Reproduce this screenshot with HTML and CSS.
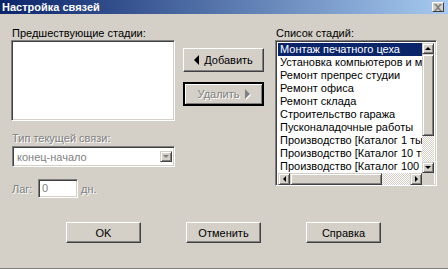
FILE: index.html
```html
<!DOCTYPE html>
<html lang="ru">
<head>
    <meta charset="UTF-8">
    <title>Настройка связей</title>
    <link rel="stylesheet" href="styles.css">
</head>
<body>
    <div class="window">
        <div class="titlebar">
            <span class="title">Настройка связей</span>
            <span class="close-btn">
                <svg width="8" height="7" viewBox="0 0 8 7">
                    <path d="M0 0h2l2 2 2-2h2L5 3.5 8 7H6L4 5 2 7H0l3-3.5z" fill="#808080"/>
                </svg>
            </span>
        </div>

        <div class="main">
            <div class="col-left">
                <div class="label">Предшествующие стадии:</div>
                <div class="listbox prev-list"></div>

                <div class="label disabled type-label">Тип текущей связи:</div>
                <div class="combo">
                    <span class="combo-text">конец-начало</span>
                    <span class="sb-btn combo-btn"><i class="arr arr-down dis"></i></span>
                </div>

                <div class="lag-row">
                    <span class="disabled lag-label">Лаг:</span>
                    <span class="lag-input">0</span>
                    <span class="disabled">дн.</span>
                </div>
            </div>

            <div class="col-mid">
                <button class="btn btn-add"><i class="tri-left"></i>Добавить</button>
                <button class="btn btn-del default"><span class="disabled">Удалить</span><i class="tri-right"></i></button>
            </div>

            <div class="col-right">
                <div class="label">Список стадий:</div>
                <div class="listbox stage-list">
                    <div class="stage-body">
                        <ul class="items">
                            <li class="selected">Монтаж печатного цеха</li>
                            <li>Установка компьютеров и монтаж сети</li>
                            <li>Ремонт препрес студии</li>
                            <li>Ремонт офиса</li>
                            <li>Ремонт склада</li>
                            <li>Строительство гаража</li>
                            <li>Пусконаладочные работы</li>
                            <li>Производство [Каталог 1 тыс. экз.]</li>
                            <li>Производство [Каталог 10 тыс. экз.]</li>
                            <li>Производство [Каталог 100 тыс. экз.]</li>
                        </ul>
                        <div class="vscroll">
                            <span class="sb-btn"><i class="arr arr-up"></i></span>
                            <span class="v-thumb"></span>
                            <span class="track"></span>
                            <span class="sb-btn"><i class="arr arr-down"></i></span>
                        </div>
                    </div>
                    <div class="hscroll">
                        <span class="sb-btn"><i class="arr arr-left"></i></span>
                        <span class="h-thumb"></span>
                        <span class="track"></span>
                        <span class="sb-btn"><i class="arr arr-right"></i></span>
                        <span class="corner"></span>
                    </div>
                </div>
            </div>
        </div>

        <div class="footer">
            <button class="btn btn-foot">OK</button>
            <button class="btn btn-foot">Отменить</button>
            <button class="btn btn-foot">Справка</button>
        </div>
    </div>
</body>
</html>
```

FILE: styles.css
```css
body {
    margin: 0;
    font-family: "Liberation Sans", Arial, sans-serif;
    font-size: 11px;
    background-color: #d4d0c8;
}
.window {
    width: 448px;
    height: 269px;
    box-sizing: border-box;
    background-color: #d4d0c8;
    border-bottom: 1px solid #808080;
    color: #000;
}
.titlebar {
    height: 14px;
    display: flex;
    align-items: center;
    justify-content: space-between;
    padding: 0 4px 0 2px;
    background: linear-gradient(to right, #0a246a, #a6caf0);
}
.title {
    color: #fff;
    font-weight: bold;
    font-size: 11px;
    line-height: 14px;
}
.close-btn {
    width: 12px;
    height: 10px;
    box-sizing: border-box;
    display: flex;
    align-items: center;
    justify-content: center;
    background-color: #d4d0c8;
    border: 1px solid;
    border-color: #fff #404040 #404040 #fff;
}
.main {
    display: flex;
    align-items: flex-start;
    padding: 13px 0 0 11px;
}
.label {
    line-height: 13px;
    height: 13px;
    padding-left: 1px;
    white-space: nowrap;
}
.disabled {
    color: #808080;
    text-shadow: 1px 1px #fff;
}
.listbox {
    background-color: #fff;
    box-sizing: border-box;
    border: 1px solid;
    border-color: #808080 #fff #fff #808080;
    box-shadow: inset 1px 1px #404040, inset -1px -1px #d4d0c8;
}
.col-left {
    width: 164px;
}
.prev-list {
    height: 81px;
}
.type-label {
    margin-top: 11px;
}
.combo {
    margin-top: 1px;
    margin-left: 1px;
    height: 21px;
    box-sizing: border-box;
    display: flex;
    align-items: center;
    justify-content: space-between;
    padding: 2px;
    background-color: #fff;
    border: 1px solid;
    border-color: #808080 #fff #fff #808080;
    box-shadow: inset 1px 1px #404040, inset -1px -1px #d4d0c8;
}
.combo-text {
    color: #808080;
    padding-left: 2px;
}
.combo-btn {
    width: 11px;
    height: 16px;
}
.lag-row {
    display: flex;
    align-items: center;
    margin-top: 12px;
    padding-left: 1px;
}
.lag-label {
    width: 26px;
}
.lag-input {
    width: 40px;
    height: 19px;
    margin-right: 3px;
    box-sizing: border-box;
    padding: 2px 3px;
    line-height: 13px;
    color: #808080;
    background-color: #fff;
    border: 1px solid;
    border-color: #808080 #fff #fff #808080;
    box-shadow: inset 1px 1px #404040, inset -1px -1px #d4d0c8;
}
.col-mid {
    width: 81px;
    margin-left: 8px;
    padding-top: 21px;
    display: flex;
    flex-direction: column;
    gap: 10px;
}
.btn {
    font-family: inherit;
    font-size: 11px;
    color: #000;
    background-color: #d4d0c8;
    box-sizing: border-box;
    border: 1px solid;
    border-color: #fff #404040 #404040 #fff;
    box-shadow: inset -1px -1px #808080, inset 1px 1px #d4d0c8;
    padding: 0;
    display: flex;
    align-items: center;
    justify-content: center;
}
.btn-add, .btn-del {
    width: 81px;
    height: 24px;
    gap: 5px;
}
.btn.default {
    border: 2px solid #000;
    box-shadow: inset 1px 1px #fff, inset -1px -1px #808080;
}
.tri-left {
    width: 0;
    height: 0;
    border-top: 5px solid transparent;
    border-bottom: 5px solid transparent;
    border-right: 5px solid #000;
}
.tri-right {
    width: 0;
    height: 0;
    border-top: 5px solid transparent;
    border-bottom: 5px solid transparent;
    border-left: 5px solid #808080;
    filter: drop-shadow(1px 1px 0 #fff);
}
.col-right {
    width: 162px;
    margin-left: 11px;
}
.stage-list {
    height: 146px;
    padding: 2px;
    display: flex;
    flex-direction: column;
}
.stage-body {
    display: flex;
    height: 130px;
}
.items {
    list-style: none;
    margin: 0;
    padding: 0;
    flex: 1;
    overflow: hidden;
}
.items li {
    height: 13px;
    line-height: 13px;
    padding-left: 2px;
    white-space: nowrap;
    overflow: hidden;
}
.items li.selected {
    background-color: #0a246a;
    color: #fff;
}
.vscroll {
    width: 12px;
    display: flex;
    flex-direction: column;
}
.hscroll {
    height: 12px;
    display: flex;
}
.sb-btn {
    flex: none;
    width: 12px;
    height: 11px;
    box-sizing: border-box;
    display: flex;
    align-items: center;
    justify-content: center;
    background-color: #d4d0c8;
    border: 1px solid;
    border-color: #d4d0c8 #404040 #404040 #d4d0c8;
    box-shadow: inset 1px 1px #fff, inset -1px -1px #808080;
}
.hscroll .sb-btn {
    width: 12px;
    height: 12px;
}
.v-thumb {
    height: 82px;
    box-sizing: border-box;
    background-color: #d4d0c8;
    border: 1px solid;
    border-color: #d4d0c8 #404040 #404040 #d4d0c8;
    box-shadow: inset 1px 1px #fff, inset -1px -1px #808080;
}
.h-thumb {
    width: 92px;
    box-sizing: border-box;
    background-color: #d4d0c8;
    border: 1px solid;
    border-color: #d4d0c8 #404040 #404040 #d4d0c8;
    box-shadow: inset 1px 1px #fff, inset -1px -1px #808080;
}
.track {
    flex: 1;
    background: repeating-conic-gradient(#d4d0c8 0 25%, #fff 0 50%) 0 0 / 2px 2px;
}
.corner {
    width: 12px;
    background-color: #d4d0c8;
}
.arr {
    width: 0;
    height: 0;
    display: block;
}
.arr-up {
    border-left: 3px solid transparent;
    border-right: 3px solid transparent;
    border-bottom: 3px solid #000;
}
.arr-down {
    border-left: 3px solid transparent;
    border-right: 3px solid transparent;
    border-top: 3px solid #000;
}
.arr-down.dis {
    border-top-color: #808080;
}
.arr-left {
    border-top: 3px solid transparent;
    border-bottom: 3px solid transparent;
    border-right: 3px solid #000;
}
.arr-right {
    border-top: 3px solid transparent;
    border-bottom: 3px solid transparent;
    border-left: 3px solid #000;
}
.footer {
    display: flex;
    gap: 45px;
    padding: 24px 0 0 66px;
}
.btn-foot {
    width: 75px;
    height: 21px;
}
```
